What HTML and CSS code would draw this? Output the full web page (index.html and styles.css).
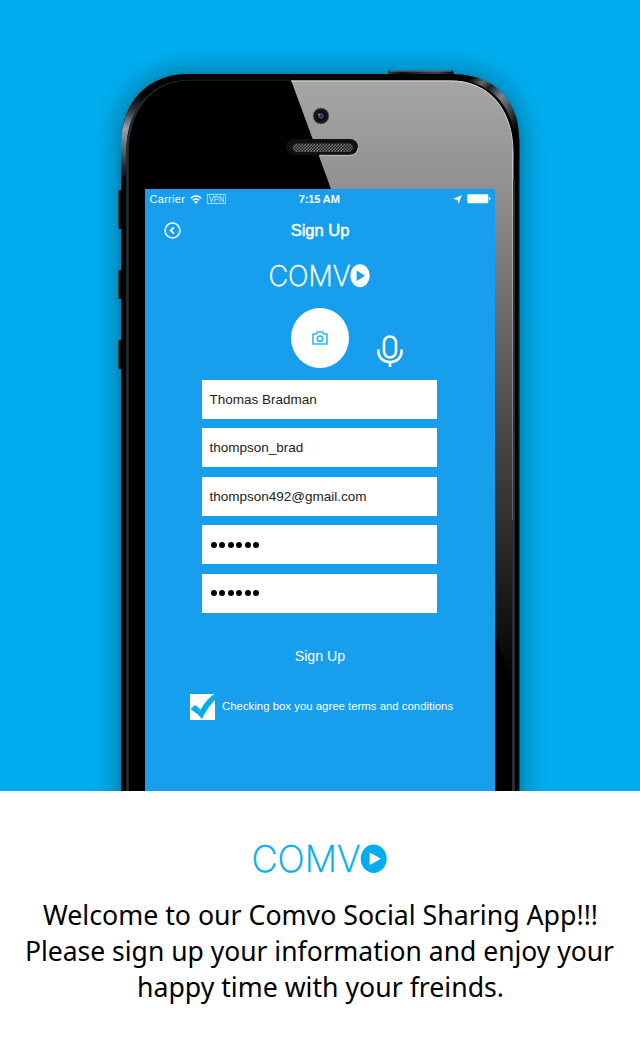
FILE: index.html
```html
<!DOCTYPE html>
<html lang="en">
<head>
<meta charset="utf-8">
<title>Comvo</title>
<link rel="stylesheet" href="styles.css">
</head>
<body>
<section class="stage">
  <svg class="device" viewBox="0 0 640 791" aria-hidden="true">
    <defs>
      <linearGradient id="gloss" x1="0" y1="80" x2="0" y2="690" gradientUnits="userSpaceOnUse">
        <stop offset="0" stop-color="#a6a6a6"/><stop offset=".18" stop-color="#909090"/>
        <stop offset=".5" stop-color="#565656"/><stop offset=".8" stop-color="#222"/><stop offset="1" stop-color="#000"/>
      </linearGradient>
      <linearGradient id="edge" x1="0" y1="80" x2="0" y2="690" gradientUnits="userSpaceOnUse">
        <stop offset="0" stop-color="#d8d8d8"/><stop offset=".25" stop-color="#b0b0b0"/><stop offset="1" stop-color="#2b3033"/>
      </linearGradient>
      <linearGradient id="shineL" x1="0" y1="95" x2="0" y2="180" gradientUnits="userSpaceOnUse">
        <stop offset="0" stop-color="#000"/><stop offset=".18" stop-color="#30353c"/><stop offset=".4" stop-color="#9aa3b2"/><stop offset=".65" stop-color="#596270"/><stop offset="1" stop-color="#000"/>
      </linearGradient>
      <linearGradient id="shineR" x1="470" y1="78" x2="519" y2="125" gradientUnits="userSpaceOnUse">
        <stop offset="0" stop-color="#000"/><stop offset=".18" stop-color="#666"/><stop offset=".3" stop-color="#1b1e24"/><stop offset=".52" stop-color="#78818f"/><stop offset="1" stop-color="#000"/>
      </linearGradient>
      <linearGradient id="key" x1="0" y1="0" x2="1" y2="0">
        <stop offset="0" stop-color="#6a747f"/><stop offset=".4" stop-color="#10151c"/><stop offset="1" stop-color="#000"/>
      </linearGradient>
      <linearGradient id="power" x1="0" y1="0" x2="1" y2="0">
        <stop offset="0" stop-color="#333c46"/><stop offset=".2" stop-color="#0b1017"/><stop offset=".75" stop-color="#3a4552"/><stop offset="1" stop-color="#05080c"/>
      </linearGradient>
      <pattern id="mesh" width="3" height="3" patternUnits="userSpaceOnUse">
        <rect width="3" height="3" fill="#777"/><circle cx=".8" cy=".8" r=".85" fill="#111"/><circle cx="2.3" cy="2.3" r=".85" fill="#111"/>
      </pattern>
      <filter id="soft" x="-20%" y="-20%" width="140%" height="140%"><feGaussianBlur stdDeviation="14"/></filter>
      <clipPath id="face"><path d="M129 800V152C129 111 151 80.500 190 80.500H451C490 80.500 513 111 513 152V800Z"/></clipPath>
    </defs>
    <path d="M121 830V144C121 103 147 74 188 74H452C494 74 519.500 103 519.500 144V830Z" fill="#00131c" opacity=".5" filter="url(#soft)"/>
    <rect x="117.300" y="190" width="6" height="39" rx="2" fill="url(#key)"/>
    <rect x="117.300" y="270" width="6" height="29" rx="2" fill="url(#key)"/>
    <rect x="117.300" y="340" width="6" height="29" rx="2" fill="url(#key)"/>
    <rect x="388" y="70.500" width="65.500" height="8" rx="2" fill="url(#power)"/>
    <path d="M390 71H452" stroke="#718090" stroke-width="1"/>
    <path d="M121 800V144C121 103 147 74 188 74H452C494 74 519.500 103 519.500 144V800Z" fill="#000"/>
    <path d="M121 180V144C121 124 128 105 140 93L146 97C132 111 126.500 130 126.500 152V180Z" fill="url(#shineL)"/>
    <path d="M467 75.500C499 80 516 103 518.500 129L514 132C508 102 491 86 464 80Z" fill="url(#shineR)"/>
    <path d="M127.500 800V152C127.500 111 151 81 190 81H291" fill="none" stroke="#262c33" stroke-width="2.500"/>
    <g clip-path="url(#face)">
      <path d="M129 800V80H513V800Z" fill="#000"/>
      <path d="M291 80L515 690V80Z" fill="url(#gloss)"/>
    </g>
    <path d="M291 81H451C490 81 513 111 513 152V680" fill="none" stroke="url(#edge)"/>
    <path d="M513.500 180V800" stroke="#292e31" stroke-width="3"/>
    <path d="M512.500 150V520" stroke="url(#edge)"/>
    <path d="M519.200 160V800" stroke="#194553"/>
    <circle cx="321" cy="116" r="8" fill="#17171b" stroke="#777" stroke-width=".7"/>
    <circle cx="321" cy="116" r="4.500" fill="#080817"/><circle cx="321" cy="116" r="2.200" fill="#22204f" stroke="#6860c0" stroke-width="1"/><circle cx="319" cy="114.500" r="1" fill="#a89952"/>
    <rect x="286" y="139" width="72" height="16" rx="8" fill="#111"/>
    <path d="M320 155.300H350Q357 155 358.300 148" fill="none" stroke="#ccc" stroke-width=".8"/>
    <rect x="292.500" y="143.500" width="60.500" height="8.500" rx="4.200" fill="url(#mesh)"/>
  </svg>
  <main class="screen">
    <div class="status">
      <div class="status-left">
        <span class="carrier">Carrier</span>
        <svg class="wifi" viewBox="0 0 12 9"><path d="M.8 3.200Q6-1.200 11.200 3.200M2.800 5.300Q6 2.700 9.200 5.300" fill="none" stroke="#fff" stroke-width="1.500"/><path d="M6 9L3.900 6.800Q6 5.300 8.100 6.800Z" fill="#fff"/></svg>
        <svg class="vpn" viewBox="0 0 19 10"><rect x=".5" y=".5" width="18" height="9" fill="none" stroke="#a9daf9"/><text x="2" y="8" textLength="15" lengthAdjust="spacingAndGlyphs">VPN</text></svg>
      </div>
      <span class="clock">7:15 AM</span>
      <div class="status-right">
        <svg class="arrow" viewBox="0 0 9 9"><path d="M8.900.1L5.500 8.900L4.500 4.800L.1 4Z" fill="#fff"/></svg>
        <svg class="battery" viewBox="0 0 24 10"><rect x=".3" y=".3" width="21" height="9" rx="1.200" fill="#fff"/><path d="M22 3Q23.500 3.500 23.500 4.800T22 6.500Z" fill="#fff"/></svg>
      </div>
    </div>
    <header class="nav">
      <svg class="back" viewBox="0 0 16 16"><circle cx="8" cy="8" r="7" fill="none" stroke="#fff" stroke-width="1.500"/><path d="M9.300 5L6.300 8L9.300 11" fill="none" stroke="#fff" stroke-width="1.700"/></svg>
      <h1 class="title">Sign Up</h1>
    </header>
    <svg class="logo" viewBox="0 0 102 25">
      <text class="wordmark small" x="-.5" y="22" textLength="82" lengthAdjust="spacingAndGlyphs">COMV</text>
      <ellipse cx="91" cy="11.700" rx="9.700" ry="11.500" fill="#fff"/><path d="M87.700 6.500L96 11.700L87.700 17Z" fill="#179eed"/>
    </svg>
    <div class="media">
      <div class="avatar">
        <svg class="camera" viewBox="0 0 16 14"><path d="M1 3H4L5.500 1H10.500L12 3H15V13H1Z" fill="none" stroke="#2bb5ef" stroke-width="1.500" stroke-linejoin="round"/><circle cx="8" cy="7.700" r="2.700" fill="none" stroke="#2bb5ef" stroke-width="1.600"/></svg>
      </div>
      <svg class="mic" viewBox="0 0 26 33"><rect x="7" y="1.500" width="12" height="21" rx="6" fill="none" stroke="#fff" stroke-width="2.600"/><path d="M1.400 14.500V16C1.400 22.500 6 27 13 27S24.600 22.500 24.600 16V14.500M13 27V32" fill="none" stroke="#fff" stroke-width="2.600"/></svg>
    </div>
    <form class="form">
      <div class="field"><span>Thomas Bradman</span></div>
      <div class="field"><span>thompson_brad</span></div>
      <div class="field"><span>thompson492@gmail.com</span></div>
      <div class="field dots"><i></i><i></i><i></i><i></i><i></i><i></i></div>
      <div class="field dots"><i></i><i></i><i></i><i></i><i></i><i></i></div>
    </form>
    <div class="submit">Sign Up</div>
    <div class="agree">
      <svg class="check" viewBox="0 0 28 30"><rect x="1" y="3" width="25" height="26" fill="#fff"/><path d="M1.500 18L6 14Q9 15.500 11.500 19Q17 8 28 1V7Q19 15 13 28Q8 22 1.500 18Z" fill="#00aeef"/></svg>
      <span>Checking box you agree terms and conditions</span>
    </div>
  </main>
</section>
<section class="caption">
  <svg class="brand" viewBox="0 0 134 30">
    <text class="wordmark large" x="-1.500" y="28" textLength="109" lengthAdjust="spacingAndGlyphs">COMV</text>
    <ellipse cx="120.700" cy="14.700" rx="13" ry="14.200" fill="#00aeef"/><path d="M116.700 8.500L128 14.800L116.700 21Z" fill="#fff"/>
  </svg>
  <svg class="copy" viewBox="0 0 640 120">
    <text x="43" y="37" textLength="555" lengthAdjust="spacingAndGlyphs">Welcome to our Comvo Social Sharing App!!!</text>
    <text x="25" y="73" textLength="589" lengthAdjust="spacingAndGlyphs">Please sign up your information and enjoy your</text>
    <text x="137" y="109" textLength="367" lengthAdjust="spacingAndGlyphs">happy time with your freinds.</text>
  </svg>
</section>
</body>
</html>
```
FILE: styles.css
```css
* { box-sizing: border-box; }
body { margin: 0; width: 640px; height: 1038px; background: #fff; font-family: "Liberation Sans", Arial, sans-serif; overflow: hidden; }
svg { display: block; flex: none; }
.stage { position: relative; height: 791px; padding: 189px 145px 0; background: #00aeef; overflow: hidden; }
.device { position: absolute; inset: 0; width: 640px; height: 791px; }
.screen { position: relative; width: 350px; height: 602px; background: #179eed; color: #fff; display: flex; flex-direction: column; }
.status { height: 20px; display: grid; grid-template-columns: 1fr auto 1fr; align-items: center; padding: 0 4px 0 4.5px; font-size: 11px; }
.status-left, .status-right { display: flex; align-items: center; }
.status-right { justify-content: flex-end; gap: 5px; }
.carrier { letter-spacing: .3px; }
.wifi { width: 12px; height: 9px; margin: 0 5px 0 5px; }
.vpn { width: 19px; height: 10px; font-size: 8.5px; fill: #d7effc; }
.clock { font-weight: bold; font-size: 11px; letter-spacing: -.1px; position: relative; left: -1px; }
.arrow { width: 9px; height: 9px; }
.battery { width: 24px; height: 10px; }
.nav { height: 42px; display: grid; grid-template-columns: 1fr auto 1fr; align-items: center; padding: 0 19px; }
.back { width: 17px; height: 17px; }
.title { margin: 0; font-size: 16.5px; font-weight: normal; -webkit-text-stroke: .5px #fff; }
.logo { width: 102px; height: 25px; margin: 13px 0 0 124px; overflow: visible; }
.wordmark { font-family: Inter, "Liberation Sans", sans-serif; font-weight: 200; }
.small { font-size: 28.5px; fill: #fff; stroke: #fff; stroke-width: .5px; }
.large { font-size: 37px; fill: #00aeef; stroke: #00aeef; stroke-width: .5px; }
.media { display: flex; align-items: flex-end; height: 78.5px; padding-left: 145.5px; gap: 28px; }
.avatar { width: 58px; height: 60px; border-radius: 50%; background: #fff; display: flex; align-items: center; justify-content: center; }
.camera { width: 16px; height: 14px; }
.mic { width: 26px; height: 33px; }
.form { margin: 12px 0 0 57px; width: 234.5px; display: flex; flex-direction: column; gap: 9.5px; }
.field { height: 39px; background: #fff; color: #222; padding-left: 7.5px; display: flex; align-items: center; font-size: 13.5px; }
.dots { gap: 2.4px; padding-left: 9px; }
.dots i { width: 6px; height: 6px; border-radius: 50%; background: #000; }
.submit { margin-top: 34px; height: 18px; line-height: 18px; text-align: center; font-size: 14.2px; }
.agree { display: flex; align-items: center; margin: 26px 0 0 44px; gap: 5px; font-size: 11.4px; white-space: nowrap; }
.check { width: 28px; height: 30px; }
.caption { height: 247px; padding-top: 53px; display: flex; flex-direction: column; align-items: center; }
.brand { width: 134px; height: 30px; overflow: visible; }
.copy { width: 640px; height: 120px; margin-top: 14px; font: 28px "Noto Sans", sans-serif; fill: #000; }
```
